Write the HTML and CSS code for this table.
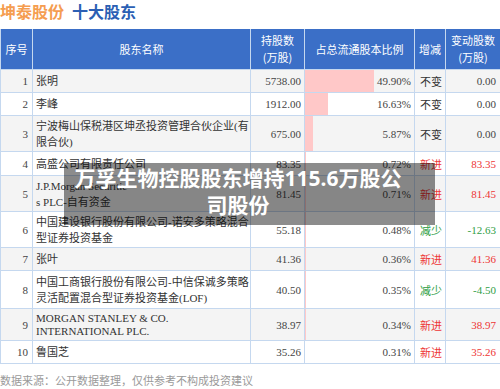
FILE: index.html
```html
<!DOCTYPE html>
<html lang="zh-CN">
<head>
<meta charset="utf-8">
<title>坤泰股份 十大股东</title>
<link rel="stylesheet" href="styles.css">
</head>
<body>
<div class="page">
  <h1 class="title"><span class="co">坤泰股份</span><span class="sub">十大股东</span></h1>
  <div class="table">
    <div class="row head">
      <div class="c c1">序号</div>
      <div class="c c2">股东名称</div>
      <div class="c c3">持股数<br>(万股)</div>
      <div class="c c4">占总流通股本比例</div>
      <div class="c c5">增减</div>
      <div class="c c6">变动股数<br>(万股)</div>
    </div>
    <div class="row odd h1">
      <div class="c c1 num">1</div>
      <div class="c c2">张明</div>
      <div class="c c3 num">5738.00</div>
      <div class="c c4 num bar" style="--w:68.9px">49.90%</div>
      <div class="c c5">不变</div>
      <div class="c c6 num">0.00</div>
    </div>
    <div class="row h1">
      <div class="c c1 num">2</div>
      <div class="c c2">李峰</div>
      <div class="c c3 num">1912.00</div>
      <div class="c c4 num bar" style="--w:22.9px">16.63%</div>
      <div class="c c5">不变</div>
      <div class="c c6 num">0.00</div>
    </div>
    <div class="row odd h2">
      <div class="c c1 num">3</div>
      <div class="c c2">宁波梅山保税港区坤丞投资管理合伙企业(有<br>限合伙)</div>
      <div class="c c3 num">675.00</div>
      <div class="c c4 num bar" style="--w:8.1px">5.87%</div>
      <div class="c c5">不变</div>
      <div class="c c6 num">0.00</div>
    </div>
    <div class="row h1 r4">
      <div class="c c1 num">4</div>
      <div class="c c2">高盛公司有限责任公司</div>
      <div class="c c3 num">83.35</div>
      <div class="c c4 num bar" style="--w:1px">0.72%</div>
      <div class="c c5 up">新进</div>
      <div class="c c6 num up">83.35</div>
    </div>
    <div class="row odd h2">
      <div class="c c1 num">5</div>
      <div class="c c2">J.P.Morgan Securitie<br>s PLC-自有资金</div>
      <div class="c c3 num">81.45</div>
      <div class="c c4 num bar" style="--w:1px">0.71%</div>
      <div class="c c5 up">新进</div>
      <div class="c c6 num up">81.45</div>
    </div>
    <div class="row h2">
      <div class="c c1 num">6</div>
      <div class="c c2">中国建设银行股份有限公司-诺安多策略混合<br>型证券投资基金</div>
      <div class="c c3 num">55.18</div>
      <div class="c c4 num bar" style="--w:0.7px">0.48%</div>
      <div class="c c5 down">减少</div>
      <div class="c c6 num down">-12.63</div>
    </div>
    <div class="row odd h1">
      <div class="c c1 num">7</div>
      <div class="c c2">张叶</div>
      <div class="c c3 num">41.36</div>
      <div class="c c4 num bar" style="--w:0.5px">0.36%</div>
      <div class="c c5 up">新进</div>
      <div class="c c6 num up">41.36</div>
    </div>
    <div class="row h2 r8">
      <div class="c c1 num">8</div>
      <div class="c c2">中国工商银行股份有限公司-中信保诚多策略<br>灵活配置混合型证券投资基金(LOF)</div>
      <div class="c c3 num">40.50</div>
      <div class="c c4 num bar" style="--w:0.5px">0.35%</div>
      <div class="c c5 down">减少</div>
      <div class="c c6 num down">-4.50</div>
    </div>
    <div class="row odd h3">
      <div class="c c1 num">9</div>
      <div class="c c2 latin">MORGAN STANLEY &amp; CO.<br>INTERNATIONAL PLC.</div>
      <div class="c c3 num">38.97</div>
      <div class="c c4 num bar" style="--w:0.5px">0.34%</div>
      <div class="c c5 up">新进</div>
      <div class="c c6 num up">38.97</div>
    </div>
    <div class="row h1">
      <div class="c c1 num">10</div>
      <div class="c c2">鲁国芝</div>
      <div class="c c3 num">35.26</div>
      <div class="c c4 num bar" style="--w:0.4px">0.31%</div>
      <div class="c c5 up">新进</div>
      <div class="c c6 num up">35.26</div>
    </div>
  </div>
  <p class="note">数据来源：公开数据整理，仅供参考不构成投资建议</p>
  <div class="banner">万孚生物控股股东增持115.6万股公司股份</div>
</div>
</body>
</html>
```
FILE: styles.css
```css
html, body {
  margin: 0;
  padding: 0;
  background: #fff;
  overflow: hidden;
}
body {
  width: 500px;
  height: 389px;
  font-family: "Liberation Serif", "Noto Sans CJK SC", serif;
  color: #333;
}
.page {
  position: relative;
  width: 500px;
  height: 389px;
}
.title {
  margin: 0;
  height: 22px;
  font-family: "Noto Sans CJK SC", sans-serif;
  font-size: 16px;
  line-height: 22px;
  font-weight: 700;
  white-space: nowrap;
}
.title .co {
  color: #f59d50;
}
.title .sub {
  color: #2b5fb4;
  margin-left: 8px;
}
.table {
  margin-top: 7px;
  width: 501px;
}
.row {
  display: grid;
  grid-template-columns: 33px 218px 54px 110px 31px 55px;
  box-sizing: border-box;
  border-bottom: 1px solid #c5d8ef;
  background: #fff;
}
.row.odd {
  background: #f4f4f4;
}
.row.head {
  height: 41px;
  background: #3b6fc7;
  color: #fff;
  font-family: "Noto Sans CJK SC", sans-serif;
  font-size: 11px;
  line-height: 17px;
}
.row.h1 { height: 23px; }
.row.r4 { height: 24px; }
.row.h2 { height: 36px; }
.row.r8 { height: 38px; }
.row.h3 { height: 32px; }
.c {
  box-sizing: border-box;
  border-right: 1px solid #c5d8ef;
  display: flex;
  align-items: center;
  padding: 0 3px;
  font-size: 11px;
  line-height: 16px;
  white-space: nowrap;
  overflow: hidden;
}
.c1 {
  border-left: 1px solid #c5d8ef;
}
.head .c {
  justify-content: center;
  text-align: center;
  padding: 0;
  line-height: 17px;
}
.c5 {
  padding-left: 5px;
  font-family: "Noto Sans CJK SC", sans-serif;
}
.num {
  justify-content: flex-end;
  padding-right: 3px;
  color: #444;
}
.c1.num {
  padding-right: 4px;
}
.c6.num {
  padding-right: 4px;
}
.latin {
  line-height: 12.5px;
}
.bar {
  background: linear-gradient(90deg, #ffc8c8 0, #ffc8c8 var(--w), transparent var(--w));
}
.up {
  color: #ee3535;
}
.down {
  color: #2f9e46;
}
.note {
  margin: 8px 0 0;
  font-family: "Noto Sans CJK SC", sans-serif;
  font-size: 11px;
  line-height: 16px;
  color: #9a9a9a;
  white-space: nowrap;
}
.banner {
  position: absolute;
  left: 64px;
  top: 163px;
  width: 371px;
  height: 62px;
  box-sizing: border-box;
  padding: 0 29px 4px 6px;
  display: flex;
  align-items: center;
  justify-content: center;
  text-align: center;
  background: rgba(0, 0, 0, 0.45);
  color: #fff;
  font-family: "Noto Sans", "Noto Sans CJK SC", sans-serif;
  font-weight: 700;
  font-size: 21px;
  line-height: 27px;
}
```
